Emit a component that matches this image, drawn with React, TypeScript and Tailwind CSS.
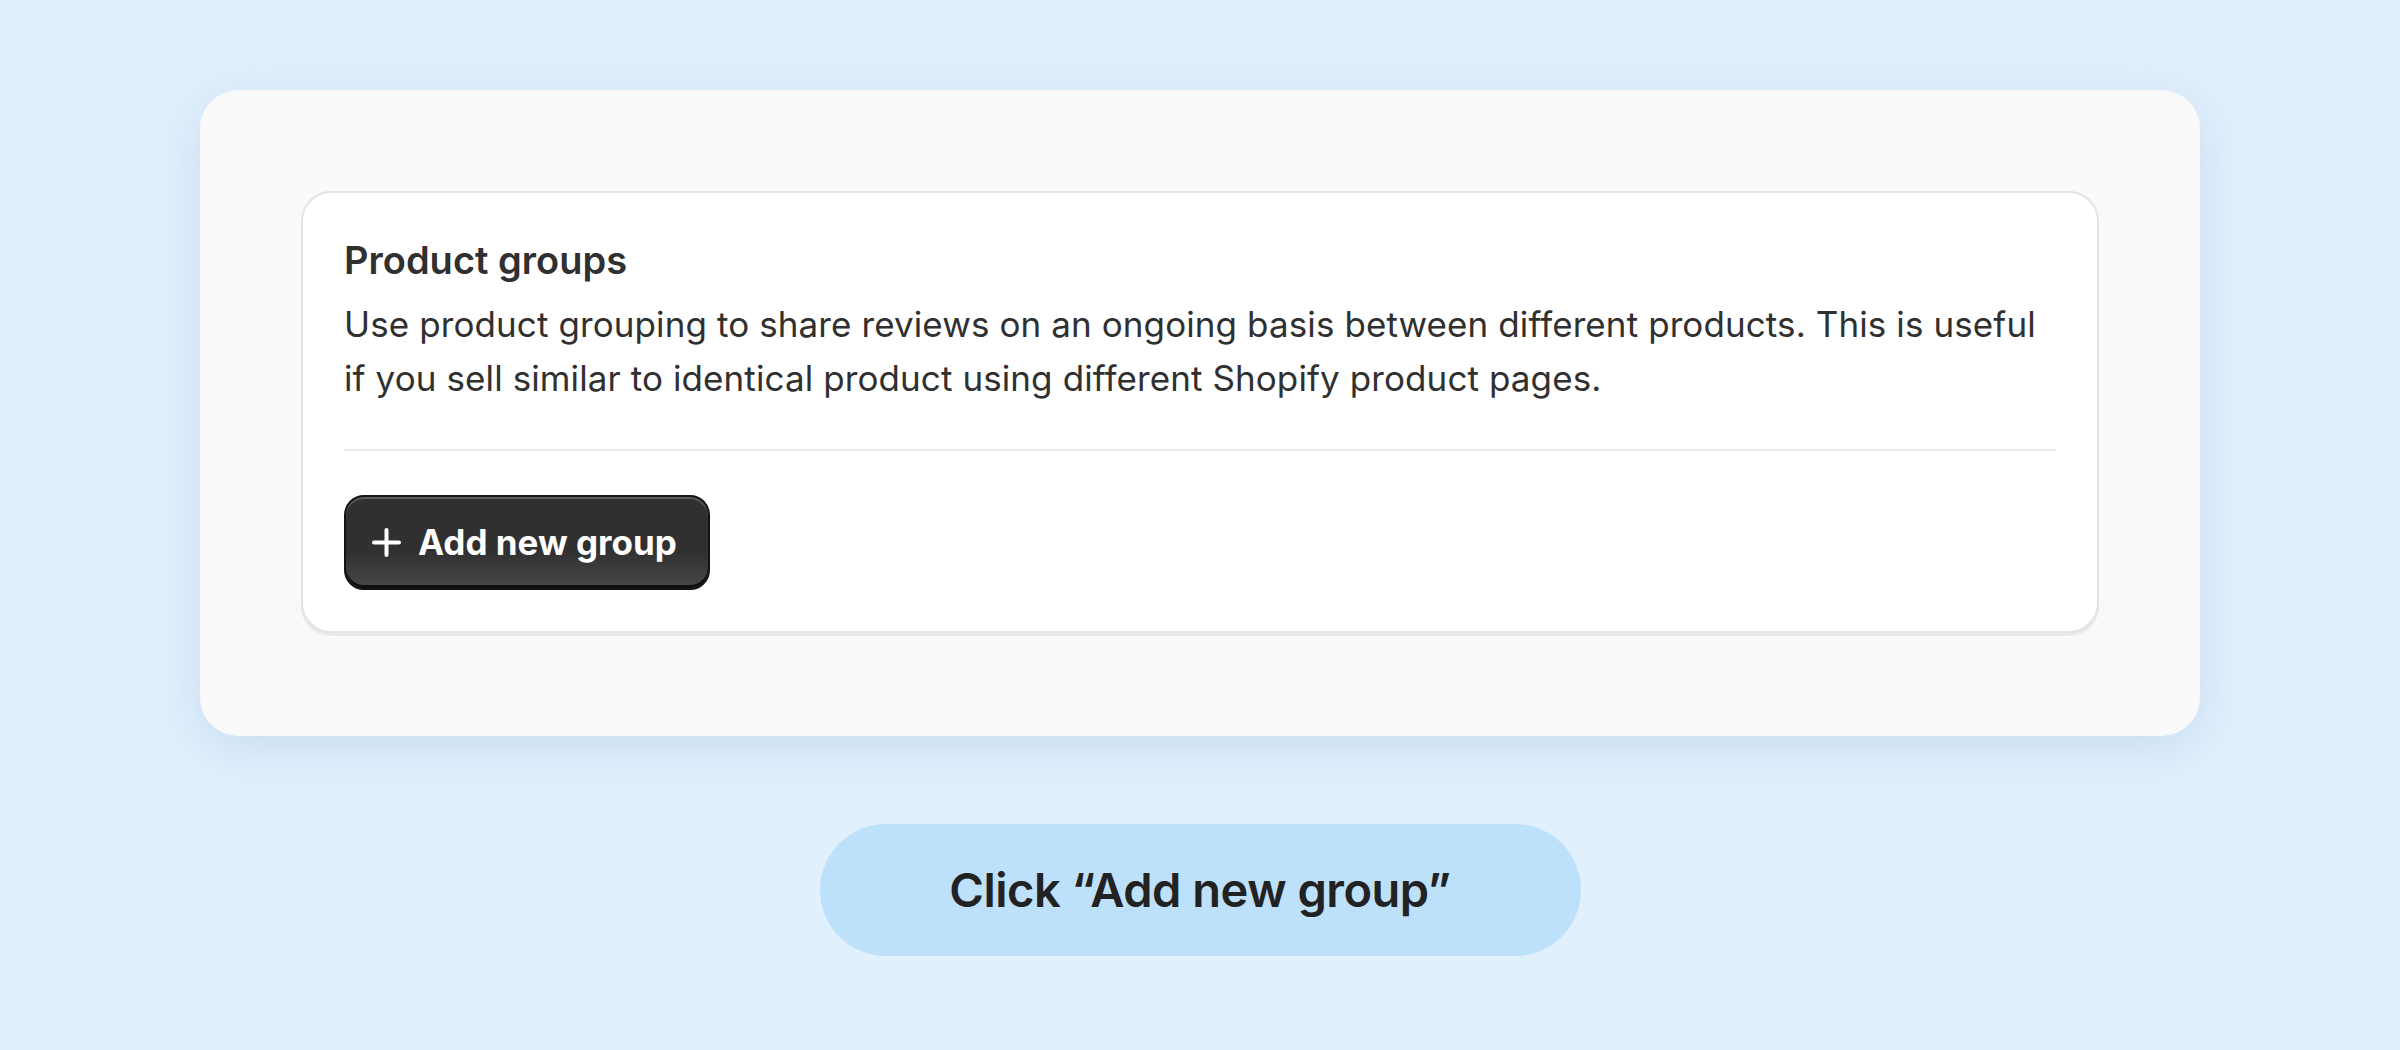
import React from "react";

function PlusIcon() {
  return (
    <svg width="29" height="29" viewBox="0 0 29 29" fill="none" stroke="white" strokeWidth="4" strokeLinecap="round">
      <path d="M14.5 2v25M2 14.5h25" />
    </svg>
  );
}

export default function App() {
  return (
    <div className="min-h-[1050px] w-full bg-[#e1f0fd] flex flex-col items-center pt-[90px]" style={{ fontFamily: "Inter, 'Noto Sans', sans-serif" }}>
      {/* Settings panel */}
      <div className="w-[2000px] h-[646px] bg-[#f9f9f9] rounded-[38px] p-[101px] shadow-[0_12px_48px_rgba(110,150,200,0.22)]">
        <div className="bg-white border-2 border-[#e3e3e3] rounded-[30px] px-[41px] pt-[40px] pb-[41px] shadow-[0_3px_1px_rgba(0,0,0,0.07)]">
          <h2 className="text-[38px] leading-[54px] font-semibold text-[#303030]">Product groups</h2>
          <p className="mt-[10px] text-[35px] tracking-[0.1px] leading-[54px] text-[#303030]">
            Use product grouping to share reviews on an ongoing basis between different products. This is useful
            <br />
            if you sell similar to identical product using different Shopify product pages.
          </p>
          <div className="mt-[44px] h-[2px] bg-[#ebebeb]" />
          <button className="mt-[44px] h-[95px] flex items-center gap-[17px] pl-[26px] pr-[31px] rounded-[20px] border-2 border-[#141414] bg-[linear-gradient(180deg,#303030_58%,#474747_100%)] shadow-[inset_0_2px_0_rgba(255,255,255,0.22),inset_0_-3px_0_#0e0e0e]">
            <PlusIcon />
            <span className="text-[35px] font-bold text-white">Add new group</span>
          </button>
        </div>
      </div>

      {/* Step hint */}
      <div className="mt-[88px] w-[761px] h-[132px] rounded-full bg-[#bde0fb] flex items-center justify-center">
        <span className="text-[47px] font-semibold text-[#222222] tracking-[-0.5px]">Click “Add new group”</span>
      </div>
    </div>
  );
}
